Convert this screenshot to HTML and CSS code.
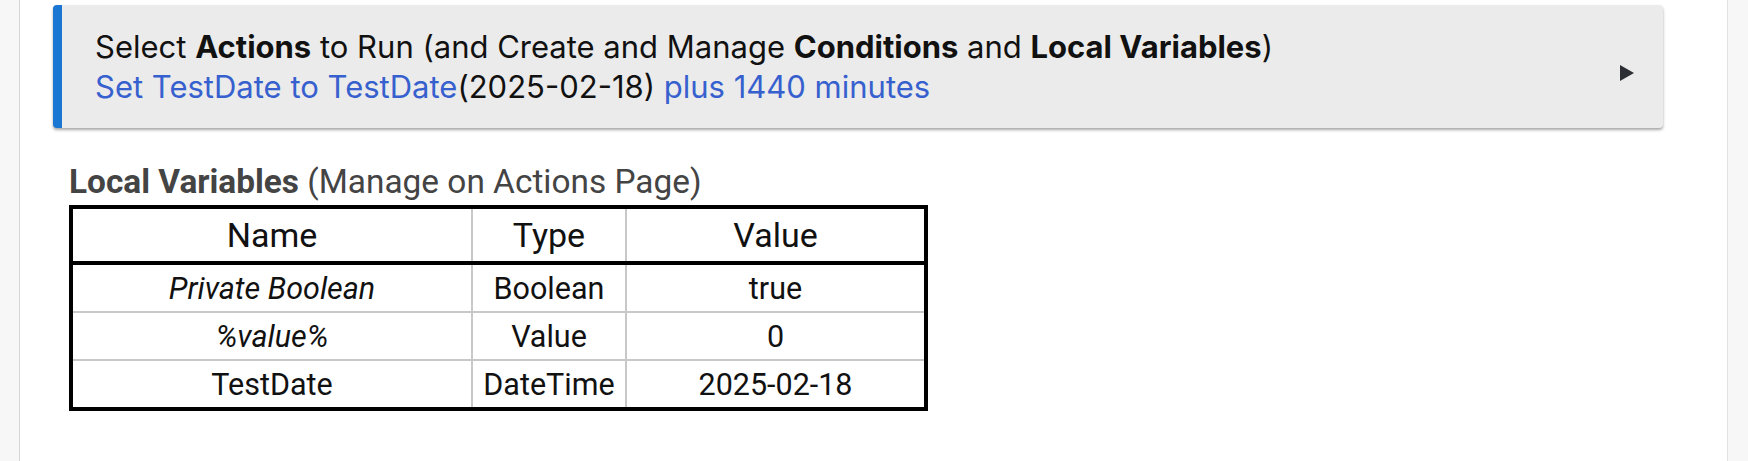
FILE: index.html
```html
<!DOCTYPE html>
<html>
<head>
<meta charset="utf-8">
<link rel="stylesheet" href="styles.css">
</head>
<body>
<div class="page">
  <div class="gutter gutter-left"></div>
  <main class="main">
    <div class="card">
      <div class="card-text">
        <div class="line">Select <b>Actions</b> to Run (and Create and Manage <b>Conditions</b> and <b>Local Variables</b>)</div>
        <div class="line"><span class="link">Set TestDate to TestDate</span>(2025-02-18) <span class="link">plus 1440 minutes</span></div>
      </div>
      <div class="arrow"></div>
    </div>
    <section class="vars">
      <div class="vars-title"><b>Local Variables</b> (Manage on Actions Page)</div>
      <table class="vars-table">
        <thead>
          <tr><th class="c-name">Name</th><th class="c-type">Type</th><th class="c-value">Value</th></tr>
        </thead>
        <tbody>
          <tr><td><i>Private Boolean</i></td><td>Boolean</td><td>true</td></tr>
          <tr><td><i>%value%</i></td><td>Value</td><td>0</td></tr>
          <tr><td>TestDate</td><td>DateTime</td><td>2025-02-18</td></tr>
        </tbody>
      </table>
    </section>
  </main>
  <div class="gutter gutter-right"></div>
</div>
</body>
</html>
```
FILE: styles.css
```css
html, body {
  margin: 0;
  padding: 0;
  background: #ffffff;
}
.page {
  display: flex;
  height: 461px;
}
.gutter {
  background: #f7f7f7;
}
.gutter-left {
  width: 19px;
  border-right: 1px solid #d6d6d6;
}
.gutter-right {
  width: 20px;
  border-left: 1px solid #e2e2e2;
}
.main {
  flex: 1;
  padding: 5px 64px 0 33px;
}
.card {
  display: flex;
  align-items: center;
  height: 123px;
  box-sizing: border-box;
  background: #ebebeb;
  border-left: 9px solid #1976d2;
  border-radius: 4px;
  box-shadow: 0 2px 3px rgba(0, 0, 0, 0.35);
  padding: 0 29px 0 33px;
  font-family: Inter, "Noto Sans", sans-serif;
  font-size: 31px;
  color: #111;
}
.card-text {
  flex: 1;
}
.line {
  line-height: 40px;
}
.card-text b {
  font-weight: 700;
}
.link {
  color: #3760cf;
}
.arrow {
  width: 0;
  height: 0;
  border-top: 8.5px solid transparent;
  border-bottom: 8.5px solid transparent;
  border-left: 14px solid #2b2f33;
  margin-top: 12px;
}
.vars {
  padding: 35px 0 0 16px;
  font-family: Roboto, "Liberation Sans", sans-serif;
}
.vars-title {
  font-size: 33.4px;
  color: #444;
  line-height: 38px;
  margin-bottom: 4px;
}
.vars-title b {
  font-weight: 700;
}
.vars-table {
  border-collapse: collapse;
  border: 4px solid #000;
  color: #111;
}
.vars-table th,
.vars-table td {
  text-align: center;
  border-left: 2px solid #c8c8c8;
}
.vars-table th {
  font-weight: 400;
  font-size: 34px;
  line-height: 40px;
  padding: 6px 0 6px;
  border-bottom: 4px solid #000;
}
.vars-table td {
  font-size: 30.5px;
  line-height: 36px;
  padding: 6px 0 4px;
  border-top: 2px solid #c8c8c8;
}
.vars-table th:first-child,
.vars-table td:first-child {
  border-left: none;
}
.c-name { width: 398px; }
.c-type { width: 152px; }
.c-value { width: 297px; }
```
